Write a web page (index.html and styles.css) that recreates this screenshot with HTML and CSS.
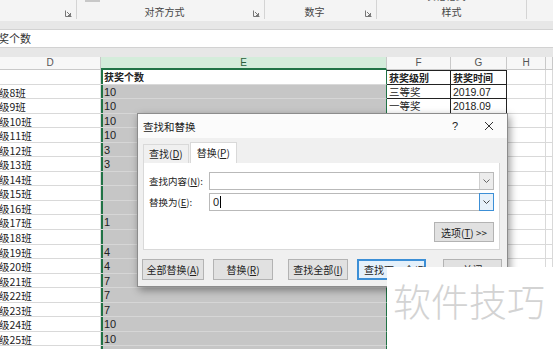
FILE: index.html
```html
<!DOCTYPE html>
<html>
<head>
<meta charset="utf-8">
<link rel="stylesheet" href="styles.css">
</head>
<body>
<div class="app">
  <div class="ribbon">
    <div class="grp g1"><span class="glabel"></span><span class="launch"><svg width="7" height="7" viewBox="0 0 7 7"><path d="M0.5 0.5V6.5H6.5" fill="none" stroke="#777" stroke-width="1"/><path d="M2 2L5.5 5.5M5.5 3V5.5H3" fill="none" stroke="#777" stroke-width="1"/></svg></span></div>
    <div class="grp g2"><span class="chip"></span><span class="glabel">对齐方式</span><span class="launch"><svg width="7" height="7" viewBox="0 0 7 7"><path d="M0.5 0.5V6.5H6.5" fill="none" stroke="#777" stroke-width="1"/><path d="M2 2L5.5 5.5M5.5 3V5.5H3" fill="none" stroke="#777" stroke-width="1"/></svg></span></div>
    <div class="grp g3"><span class="glabel">数字</span><span class="launch"><svg width="7" height="7" viewBox="0 0 7 7"><path d="M0.5 0.5V6.5H6.5" fill="none" stroke="#777" stroke-width="1"/><path d="M2 2L5.5 5.5M5.5 3V5.5H3" fill="none" stroke="#777" stroke-width="1"/></svg></span></div>
    <div class="grp g4"><span class="peek">▾ &nbsp; &nbsp; &nbsp; 表格格式 ▾ &nbsp; &nbsp; &nbsp; &nbsp; ▾</span><span class="glabel">样式</span></div>
    <div class="grp g5"></div>
  </div>
  <div class="fwrap"><div class="fbar">奖个数</div></div>
  <div class="sheet">
    <div class="row hdr"><div class="c">D</div><div class="c esel">E</div><div class="c">F</div><div class="c">G</div><div class="c">H</div><div class="c"></div></div>
    <div class="row"><div class="c d"></div><div class="c e act">获奖个数</div><div class="c t b">获奖级别</div><div class="c t b">获奖时间</div><div class="c"></div><div class="c"></div></div>
    <div class="row"><div class="c d">级8班</div><div class="c e">10</div><div class="c t">三等奖</div><div class="c t">2019.07</div><div class="c"></div><div class="c"></div></div>
    <div class="row"><div class="c d">级9班</div><div class="c e">10</div><div class="c t">一等奖</div><div class="c t">2018.09</div><div class="c"></div><div class="c"></div></div>
    <div class="row"><div class="c d">级10班</div><div class="c e">10</div><div class="c"></div><div class="c"></div><div class="c"></div><div class="c"></div></div>
    <div class="row"><div class="c d">级11班</div><div class="c e">10</div><div class="c"></div><div class="c"></div><div class="c"></div><div class="c"></div></div>
    <div class="row"><div class="c d">级12班</div><div class="c e">3</div><div class="c"></div><div class="c"></div><div class="c"></div><div class="c"></div></div>
    <div class="row"><div class="c d">级13班</div><div class="c e">3</div><div class="c"></div><div class="c"></div><div class="c"></div><div class="c"></div></div>
    <div class="row"><div class="c d">级14班</div><div class="c e"></div><div class="c"></div><div class="c"></div><div class="c"></div><div class="c"></div></div>
    <div class="row"><div class="c d">级15班</div><div class="c e"></div><div class="c"></div><div class="c"></div><div class="c"></div><div class="c"></div></div>
    <div class="row"><div class="c d">级16班</div><div class="c e"></div><div class="c"></div><div class="c"></div><div class="c"></div><div class="c"></div></div>
    <div class="row"><div class="c d">级17班</div><div class="c e">1</div><div class="c"></div><div class="c"></div><div class="c"></div><div class="c"></div></div>
    <div class="row"><div class="c d">级18班</div><div class="c e"></div><div class="c"></div><div class="c"></div><div class="c"></div><div class="c"></div></div>
    <div class="row"><div class="c d">级19班</div><div class="c e">4</div><div class="c"></div><div class="c"></div><div class="c"></div><div class="c"></div></div>
    <div class="row"><div class="c d">级20班</div><div class="c e">4</div><div class="c"></div><div class="c"></div><div class="c"></div><div class="c"></div></div>
    <div class="row"><div class="c d">级21班</div><div class="c e">7</div><div class="c"></div><div class="c"></div><div class="c"></div><div class="c"></div></div>
    <div class="row"><div class="c d">级22班</div><div class="c e">7</div><div class="c"></div><div class="c"></div><div class="c"></div><div class="c"></div></div>
    <div class="row"><div class="c d">级23班</div><div class="c e">7</div><div class="c"></div><div class="c"></div><div class="c"></div><div class="c"></div></div>
    <div class="row"><div class="c d">级24班</div><div class="c e">10</div><div class="c"></div><div class="c"></div><div class="c"></div><div class="c"></div></div>
    <div class="row"><div class="c d">级25班</div><div class="c e">10</div><div class="c"></div><div class="c"></div><div class="c"></div><div class="c"></div></div>
    <div class="row"><div class="c d"></div><div class="c e"></div><div class="c"></div><div class="c"></div><div class="c"></div><div class="c"></div></div>
  </div>

  <div class="dlg">
    <div class="dtitle"><span class="dname">查找和替换</span><span class="dq">?</span><span class="dx"><svg width="10" height="10" viewBox="0 0 10 10"><path d="M1 1L9 9M9 1L1 9" stroke="#333" stroke-width="1"/></svg></span></div>
    <div class="tabs"><span class="tab">查找(<u>D</u>)</span><span class="tab on">替换(<u>P</u>)</span></div>
    <div class="panel">
      <div class="frow"><span class="lbl">查找内容(<u>N</u>):</span><div class="inp"><span class="txt"></span><span class="dd"><svg width="7" height="4" viewBox="0 0 7 4"><path d="M0.5 0.5L3.5 3.5L6.5 0.5" fill="none" stroke="#666" stroke-width="1"/></svg></span></div></div>
      <div class="frow"><span class="lbl">替换为(<u>E</u>):</span><div class="inp"><span class="txt">0<i class="caret"></i></span><span class="dd focus"><svg width="7" height="4" viewBox="0 0 7 4"><path d="M0.5 0.5L3.5 3.5L6.5 0.5" fill="none" stroke="#444" stroke-width="1"/></svg></span></div></div>
      <div class="optrow"><span class="btn opt">选项(<u>T</u>) &gt;&gt;</span></div>
    </div>
    <div class="btns">
      <span class="btn b1">全部替换(<u>A</u>)</span>
      <span class="btn b2">替换(<u>R</u>)</span>
      <span class="btn b3">查找全部(<u>I</u>)</span>
      <span class="btn b4 focus">查找下一个(<u>F</u>)</span>
      <span class="btn b5">关闭</span>
    </div>
  </div>

  <div class="wm">软件技巧</div>
</div>
</body>
</html>
```

FILE: styles.css
```css
* { box-sizing: border-box; margin: 0; padding: 0; }
body {
  width: 553px; height: 349px; overflow: hidden; background: #fff;
  font-family: "Liberation Sans", "Noto Sans CJK SC", sans-serif; color: #222;
}
.app { position: relative; width: 553px; height: 349px; overflow: hidden; }

/* ribbon */
.ribbon { display: flex; height: 21px; background: #f4f4f4; overflow: hidden; }
.grp {
  position: relative; height: 19px; border-right: 1px solid #d4d4d4;
  display: flex; flex-direction: column; justify-content: flex-end; align-items: center;
  padding-right: 12px;
}
.g1 { width: 77px; }
.g2 { width: 188px; }
.g3 { width: 112px; }
.g4 { width: 150px; padding-right: 0; justify-content: space-between; }
.g5 { flex: 1; border-right: none; }
.glabel { font-family: "Noto Sans CJK SC", sans-serif; font-size: 10px; line-height: 12px; color: #444; margin-bottom: 1px; }
.launch { position: absolute; right: 4px; bottom: 2px; width: 7px; height: 7px; display: flex; }
.chip { position: absolute; left: 8px; top: 0; width: 15px; height: 2px; background: #c8c8c8; }
.peek { font-family: "Noto Sans CJK SC", sans-serif; font-size: 10px; line-height: 12px; margin-top: -10px; color: #555; white-space: nowrap; }

/* formula bar */
.fwrap { background: #e7e7e7; padding: 8px 0 9px; }
.fbar {
  height: 19px; background: #fff; border-top: 1px solid #d2d2d2; border-bottom: 1px solid #d2d2d2;
  font-family: "Noto Sans CJK SC", sans-serif; font-size: 11px; line-height: 17px; color: #333;
  text-indent: -2px; overflow: hidden;
}

/* sheet */
.sheet { display: flex; flex-direction: column; }
.row { display: grid; grid-template-columns: 101px 286px 64px 56px 39px 7px; height: 14.55px; flex: none; }
.c {
  border-right: 1px solid #d9d9d9; border-bottom: 1px solid #d9d9d9;
  font-size: 11px; line-height: 15px; padding-left: 2px; overflow: hidden; white-space: nowrap;
  font-family: "Liberation Sans", "Noto Sans CJK SC", sans-serif; color: #222;
}
.hdr { height: 13px; }
.hdr .c {
  background: #f7f7f7; border-right-color: #c9c9c9; border-bottom-color: #c9c9c9;
  text-align: center; font-size: 10px; line-height: 12px; color: #555; padding-left: 0;
}
.hdr .esel { background: #d4ecdb; border-bottom: 2px solid #217346; color: #2b5f3d; }
.d { text-indent: -3px; font-family: "Noto Sans CJK SC", sans-serif; font-size: 10.5px; }
.e {
  background: #c6c6c6; border-bottom-color: #d6d6d6; border-right: 1px solid #217346;
  box-shadow: inset 2px 0 0 #217346; padding-left: 3px;
}
.e.act { background: #fff; font-weight: bold; font-family: "Noto Sans CJK SC", sans-serif; font-size: 10px; line-height: 14px; border-bottom-color: #d9d9d9; }
.t { border-right: 1px solid #222; border-bottom: 1px solid #222; font-family: "Liberation Sans", "Noto Sans CJK SC", sans-serif; font-size: 10.5px; }
.b { font-weight: bold; font-family: "Noto Sans CJK SC", sans-serif; font-size: 10px; border-top: 1px solid #222; line-height: 13px; }

/* dialog */
.dlg {
  position: absolute; left: 137px; top: 113px; width: 371px; height: 174px;
  background: #f0f0f0; border: 1px solid #8c8c8c;
  box-shadow: 2px 3px 8px rgba(0,0,0,0.4);
  font-family: "Noto Sans CJK SC", sans-serif; font-size: 10px; color: #222;
  display: flex; flex-direction: column;
}
.dtitle { height: 24px; background: #fbfbfb; display: flex; align-items: center; padding-left: 5px; }
.dname { font-size: 10.5px; flex: 1; }
.dq { width: 12px; text-align: center; font-family: "Liberation Sans", sans-serif; font-size: 11px; margin-right: 22px; }
.dx { width: 12px; display: flex; justify-content: center; margin-right: 12px; }
.tabs { display: flex; align-items: flex-end; height: 25px; padding-left: 5px; }
.tab { height: 19px; line-height: 18px; padding: 0 5px; margin-right: 1px; border: 1px solid #d9d9d9; border-bottom: none; background: #f0f0f0; white-space: nowrap; }
.tab.on { background: #fff; height: 21px; line-height: 20px; padding: 0 6px; }
.panel {
  margin: 0 7px 0 5px; height: 87px; background: #fff; border: 1px solid #d9d9d9; border-top: none;
  padding: 9px 5px 0 5px; display: flex; flex-direction: column;
}
.frow { display: flex; align-items: center; height: 18px; margin-bottom: 3px; }
.lbl { width: 60px; flex: none; white-space: nowrap; font-size: 9.5px; }
.inp { width: 287px; height: 18px; border: 1px solid #b9b9b9; display: flex; background: #fff; }
.txt { flex: 1; font-family: "Liberation Sans", sans-serif; font-size: 11px; line-height: 16px; padding-left: 3px; display: flex; align-items: center; }
.caret { display: inline-block; width: 1px; height: 12px; background: #000; margin-left: 1px; }
.dd { width: 14px; height: 16px; background: #ececec; border-left: 1px solid #cfcfcf; display: flex; align-items: center; justify-content: center; }
.dd.focus { background: #e7f1fa; border: 1px solid #3c8fd6; height: 18px; margin: -1px -1px 0 0; width: 15px; }
.optrow { display: flex; justify-content: flex-end; margin-top: 8px; }
.btn {
  display: inline-flex; align-items: center; justify-content: center; height: 21px;
  background: #e1e1e1; border: 1px solid #b3b3b3; white-space: nowrap; font-size: 10px;
}
.opt { width: 60px; height: 20px; }
.btns { display: flex; margin-top: 9px; padding-left: 4px; }
.b1 { width: 62px; }
.b2 { width: 60px; margin-left: 9px; }
.b3 { width: 60px; margin-left: 15px; }
.b4 { width: 69px; margin-left: 9px; justify-content: flex-start; padding-left: 5px; }
.b5 { width: 59px; margin-left: 17px; }
.btn.focus { border: 2px solid #3c8fd6; background: #e5f1fb; }

/* watermark */
.wm {
  position: absolute; left: 387px; top: 267px; width: 166px; height: 82px; background: #fff;
  font-family: "Noto Sans CJK SC", sans-serif; font-weight: 300; font-size: 38px; color: #d3d3d3;
  padding: 11px 0 0 6px; line-height: 44px; white-space: nowrap;
}
```
